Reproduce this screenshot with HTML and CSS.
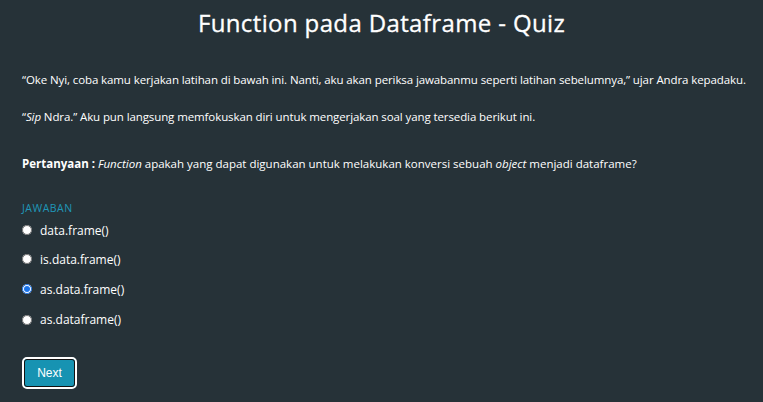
FILE: index.html
```html
<!DOCTYPE html>
<html lang="id">
<head>
<meta charset="utf-8">
<link rel="stylesheet" href="styles.css">
</head>
<body>
<div class="page">
  <h1 class="title">Function pada Dataframe - Quiz</h1>
  <p class="para">“Oke Nyi, coba kamu kerjakan latihan di bawah ini. Nanti, aku akan periksa jawabanmu seperti latihan sebelumnya,” ujar Andra kepadaku.</p>
  <p class="para">“<em>Sip</em> Ndra.” Aku pun langsung memfokuskan diri untuk mengerjakan soal yang tersedia berikut ini.</p>
  <p class="para question"><strong>Pertanyaan :</strong> <em>Function</em> apakah yang dapat digunakan untuk melakukan konversi sebuah <em>object</em> menjadi dataframe?</p>
  <div class="answers">
    <div class="label">JAWABAN</div>
    <label class="option"><input type="radio" name="q" class="radio"><span>data.frame()</span></label>
    <label class="option"><input type="radio" name="q" class="radio"><span>is.data.frame()</span></label>
    <label class="option"><input type="radio" name="q" class="radio" checked><span>as.data.frame()</span></label>
    <label class="option"><input type="radio" name="q" class="radio"><span>as.dataframe()</span></label>
  </div>
  <button class="next" type="button">Next</button>
</div>
</body>
</html>
```
FILE: styles.css
```css
html, body {
  margin: 0;
  padding: 0;
  background: #263238;
}
.page {
  width: 763px;
  height: 402px;
  box-sizing: border-box;
  padding: 8px 0 0 22px;
  color: #ffffff;
  font-family: "Open Sans", "DejaVu Sans", sans-serif;
  display: flex;
  flex-direction: column;
  align-items: flex-start;
}
.title {
  align-self: stretch;
  margin: 0 0 0 -22px;
  text-align: center;
  font-size: 24px;
  font-weight: 400;
  line-height: 30px;
  letter-spacing: 0.37px;
  -webkit-text-stroke: 0.3px #ffffff;
}
.para {
  margin: 0;
  font-size: 11.5px;
  line-height: 16px;
  letter-spacing: -0.1px;
  white-space: nowrap;
}
.question { letter-spacing: 0; }
.title + .para { margin-top: 34px; }
.para + .para { margin-top: 21px; }
.question { margin-top: 31px !important; }
.answers {
  margin-top: 29px;
  display: flex;
  flex-direction: column;
}
.label {
  color: #1f97b8;
  font-size: 10.5px;
  line-height: 14px;
  letter-spacing: 0.5px;
}
.option {
  display: flex;
  align-items: center;
  gap: 8px;
  height: 30.3px;
  font-size: 12px;
}
.option:first-of-type { margin-top: 1px; height: 28px; }
.radio {
  margin: 0;
  width: 10px;
  height: 10px;
  accent-color: #1a73e8;
}
.next {
  margin-top: 22px;
  width: 55px;
  height: 32px;
  background: #1793b2;
  color: #ffffff;
  border: 2px solid #ffffff;
  outline: 1px solid #111;
  outline-offset: -3px;
  border-radius: 5px;
  font-family: "Liberation Sans", Arial, sans-serif;
  font-size: 12px;
}
```
